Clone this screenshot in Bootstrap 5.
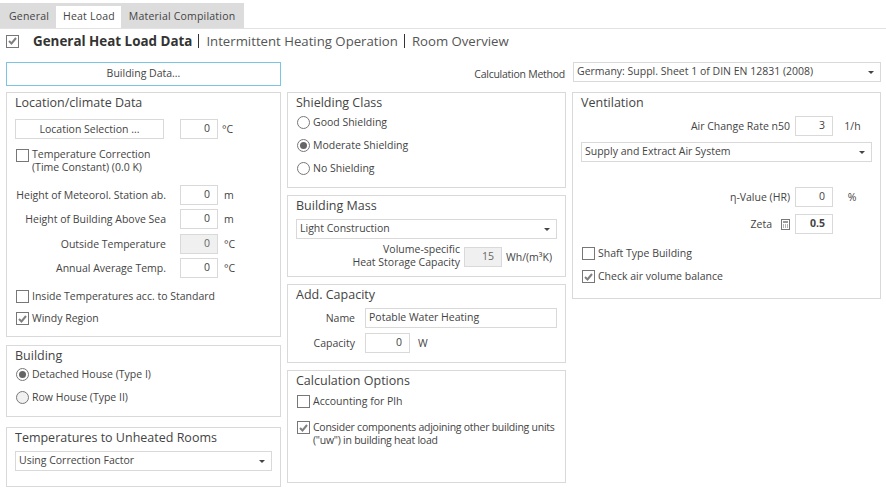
<!DOCTYPE html>
<html lang="en">
<head>
  <meta charset="UTF-8">
  <meta name="viewport" content="width=device-width, initial-scale=1.0">
  <title>Heat Load</title>
  <link href="https://cdn.jsdelivr.net/npm/bootstrap@5.3.2/dist/css/bootstrap.min.css" rel="stylesheet">
  <style>
    body {
      background: #fff;
      color: #444;
      font-family: "Open Sans", "Liberation Sans", sans-serif;
      font-size: 10.5px;
      line-height: 13px;
      overflow: hidden;
    }
    /* tabs */
    .tab-line {
      height: 29px;
      padding-top: 3px;
      border-bottom: 1px solid #e2e2e2;
    }
    .tab-strip {
      width: 244px;
      height: 25px;
      background: #dcdcdc;
      padding-top: 3px;
      border: 0;
    }
    .tab-strip .nav-link {
      height: 22px;
      padding: 4px 7px 0 9px;
      color: #444;
      border: 0;
      border-radius: 0;
      font-size: 10.5px;
      letter-spacing: .2px;
      white-space: nowrap;
      background: transparent;
    }
    .tab-strip .nav-item + .nav-item .nav-link { padding-left: 8px; }
    .tab-strip .nav-item .nav-link.active { background: #fff; color: #444; padding: 4px 6px 0 7px; }

    /* header */
    .head-row { height: 24px; padding-left: 6px; }
    .head-row .form-check-input.tick { margin: 0 14px 0 0; }
    .head-title { font-size: 13.2px; color: #555; line-height: 16px; white-space: nowrap; }
    .head-title b { color: #333; font-weight: 700; font-size: 13.4px; }
    .head-sep { display: inline-block; width: 1px; height: 14px; background: #333; margin: 0 7px 0 6px; vertical-align: -2px; }

    /* top row */
    .top-row { height: 30px; padding: 6px 0 0 6px; margin-top: 3px; }
    .btn-building {
      width: 275px;
      height: 24px;
      padding: 0;
      border: 1px solid #7cc4e4;
      border-radius: 0;
      background: #fff;
      color: #444;
      font-size: 10.5px;
    }
    .calc-label { width: 292px; height: 24px; justify-content: flex-end; padding: 0 8px 0 0; letter-spacing: -.25px; }

    /* columns */
    .cols { padding: 6px 0 0 6px; gap: 6px; }
    .col-left { width: 275px; }
    .col-mid { width: 279px; }
    .col-right { width: 309px; }

    .box {
      border: 1px solid #d9d9d9;
      padding: 2px 8px 0 8px;
      background: #fff;
    }
    .box-title { font-size: 12.5px; line-height: 16px; color: #444; margin: 0; font-weight: 400; }
    .h-loc { height: 245px; margin-bottom: 8px; }
    .h-bld { height: 72px; margin-bottom: 10px; }
    .h-tmp { height: 60px; }
    .h-shi { height: 96px; margin-bottom: 7px; }
    .h-mas { height: 82px; margin-bottom: 7px; }
    .h-add { height: 79px; margin-bottom: 7px; }
    .h-cal { height: 113px; }
    .h-ven { height: 207px; }

    /* controls */
    .form-control.fld {
      width: 38px;
      height: 20px;
      min-height: 0;
      padding: 0 7px 2px 2px;
      border: 1px solid #d9d9d9;
      border-radius: 0;
      font-size: 10.5px;
      line-height: 13px;
      text-align: right;
      color: #444;
      box-shadow: none;
    }
    .form-control.fld:disabled { background: #f0f0f0; color: #666; opacity: 1; }
    .form-control.fld-wide { width: 192px; text-align: left; padding: 0 2px 3px 3px; }
    .form-control.fld-cap { width: 45px; }
    .form-control.fld-strong { font-weight: 700; }
    .form-select.pick {
      height: 20px;
      min-height: 0;
      padding: 0 20px 1px 3px;
      border: 1px solid #d9d9d9;
      border-radius: 0;
      font-size: 10.5px;
      line-height: 13px;
      color: #444;
      box-shadow: none;
      background-position: right 6px center;
      background-size: 6px 3px;
      background-image: url("data:image/svg+xml,%3csvg xmlns='http://www.w3.org/2000/svg' viewBox='0 0 6 3'%3e%3cpath fill='%23444' d='M0 0h6L3 3z'/%3e%3c/svg%3e");
    }
    .pick-calc { width: 308px; }
    .btn-loc {
      width: 149px;
      height: 20px;
      padding: 1px 0 0;
      border: 1px solid #d9d9d9;
      border-radius: 0;
      background: #fff;
      color: #444;
      font-size: 10.5px;
    }
    .form-check-input.tick {
      flex: none;
      width: 13px;
      height: 13px;
      margin: 0 3px 0 1px;
      border: 1px solid #777;
      border-radius: 0;
      background-color: #fff;
      box-shadow: none;
    }
    .form-check-input.tick:checked {
      background-color: #fff;
      border-color: #777;
      background-size: 9px 8px;
      background-image: url("data:image/svg+xml,%3csvg xmlns='http://www.w3.org/2000/svg' viewBox='0 0 9 8'%3e%3cpath fill='none' stroke='%23808080' stroke-width='2' d='M1 4l2.5 2.5L8 1'/%3e%3c/svg%3e");
    }
    .form-check-input.dot {
      flex: none;
      width: 13px;
      height: 13px;
      margin: 0 3px 0 1px;
      border: 1px solid #777;
      background-color: #fff;
      box-shadow: none;
    }
    .form-check-input.dot-soft { background-color: #f1f1f1; }
    .form-check-input.dot:checked {
      background-color: #fff;
      border-color: #777;
      background-size: 11px 11px;
      background-image: url("data:image/svg+xml,%3csvg xmlns='http://www.w3.org/2000/svg' viewBox='0 0 11 11'%3e%3ccircle cx='5.5' cy='5.5' r='3.5' fill='%23666'/%3e%3c/svg%3e");
    }
    .ln { height: 20px; }
    .opt { margin: 0; color: #444; white-space: nowrap; }
    .opt-up { margin-top: -1px; }
    .opt-tight { letter-spacing: -.25px; }
    .lab-left { width: 166px; text-align: right; padding-right: 14px; margin-left: -1px; flex: none; white-space: nowrap; }
    .unit { padding-left: 4px; white-space: nowrap; }
    .unit-gap { padding-left: 6px; }

    /* per-row spacing */
    .gap-4px { margin-top: 4px; }
    .gap-5px { margin-top: 5px; }
    .gap-6px { margin-top: 6px; }
    .gap-7px { margin-top: 7px; }
    .gap-8px { margin-top: 8px; }
    .gap-9px { margin-top: 9px; }
    .gap-10px { margin-top: 10px; }
    .gap-11px { margin-top: 11px; }
    .gap-12px { margin-top: 12px; }
    .gap-13px { margin-top: 13px; }
    .gap-25px { margin-top: 25px; }
    .lab-store { width: 164px; text-align: right; line-height: 13px; flex: none; margin-top: -2px; }
    .lab-add { width: 69px; text-align: right; padding-right: 10px; flex: none; }
    .lab-vent { width: 214px; text-align: right; padding-right: 5px; flex: none; }
    .lab-zeta { padding-right: 0; }
    .vent-unit { width: 38px; text-align: center; }
    .vent-unit-wide { width: 48px; }
    .calc-ico { width: 9px; height: 11px; margin-left: 9px; margin-right: 5px; flex: none; }
  </style>
</head>
<body>
  <!-- Tabs -->
  <div class="tab-line">
    <ul class="nav nav-tabs tab-strip flex-nowrap">
      <li class="nav-item"><a class="nav-link" href="#">General</a></li>
      <li class="nav-item"><a class="nav-link active" href="#">Heat Load</a></li>
      <li class="nav-item"><a class="nav-link" href="#">Material Compilation</a></li>
    </ul>
  </div>

  <!-- Section header -->
  <div class="head-row d-flex align-items-center">
    <input class="form-check-input tick" type="checkbox" checked>
    <div class="head-title"><b>General Heat Load Data</b><span class="head-sep"></span>Intermittent Heating Operation<span class="head-sep"></span>Room Overview</div>
  </div>

  <div class="top-row d-flex align-items-start">
    <button class="btn btn-building" type="button">Building Data...</button>
    <div class="calc-label d-flex align-items-center">Calculation Method</div>
    <select class="form-select pick pick-calc"><option>Germany: Suppl. Sheet 1 of DIN EN 12831 (2008)</option></select>
  </div>

  <div class="cols d-flex align-items-start">
    <!-- Left column -->
    <div class="col-left">
      <div class="box h-loc">
        <h6 class="box-title">Location/climate Data</h6>
        <div class="ln d-flex align-items-center gap-8px">
          <button class="btn btn-loc" type="button">Location Selection ...</button>
          <input class="form-control fld ms-3" value="0">
          <span class="unit">°C</span>
        </div>
        <div class="d-flex align-items-start gap-10px">
          <input class="form-check-input tick" type="checkbox" id="c1">
          <label class="opt opt-up" for="c1">Temperature Correction<br>(Time Constant) (0.0 K)</label>
        </div>
        <div class="ln d-flex align-items-center gap-11px">
          <span class="lab-left">Height of Meteorol. Station ab.</span>
          <input class="form-control fld" value="0"><span class="unit unit-gap">m</span>
        </div>
        <div class="ln d-flex align-items-center gap-4px">
          <span class="lab-left">Height of Building Above Sea</span>
          <input class="form-control fld" value="0"><span class="unit unit-gap">m</span>
        </div>
        <div class="ln d-flex align-items-center gap-5px">
          <span class="lab-left">Outside Temperature</span>
          <input class="form-control fld" value="0" disabled><span class="unit unit-gap">°C</span>
        </div>
        <div class="ln d-flex align-items-center gap-4px">
          <span class="lab-left">Annual Average Temp.</span>
          <input class="form-control fld" value="0"><span class="unit unit-gap">°C</span>
        </div>
        <div class="d-flex align-items-center gap-12px">
          <input class="form-check-input tick" type="checkbox" id="c2">
          <label class="opt" for="c2">Inside Temperatures acc. to Standard</label>
        </div>
        <div class="d-flex align-items-center gap-9px">
          <input class="form-check-input tick" type="checkbox" id="c3" checked>
          <label class="opt" for="c3">Windy Region</label>
        </div>
      </div>

      <div class="box h-bld">
        <h6 class="box-title">Building</h6>
        <div class="d-flex align-items-center gap-4px">
          <input class="form-check-input dot" type="radio" name="bld" id="r1" checked>
          <label class="opt" for="r1">Detached House (Type I)</label>
        </div>
        <div class="d-flex align-items-center gap-10px">
          <input class="form-check-input dot dot-soft" type="radio" name="bld" id="r2">
          <label class="opt" for="r2">Row House (Type II)</label>
        </div>
      </div>

      <div class="box h-tmp">
        <h6 class="box-title">Temperatures to Unheated Rooms</h6>
        <select class="form-select pick gap-5px"><option>Using Correction Factor</option></select>
      </div>
    </div>

    <!-- Middle column -->
    <div class="col-mid">
      <div class="box h-shi">
        <h6 class="box-title">Shielding Class</h6>
        <div class="d-flex align-items-center gap-5px">
          <input class="form-check-input dot" type="radio" name="shi" id="s1">
          <label class="opt" for="s1">Good Shielding</label>
        </div>
        <div class="d-flex align-items-center gap-10px">
          <input class="form-check-input dot" type="radio" name="shi" id="s2" checked>
          <label class="opt" for="s2">Moderate Shielding</label>
        </div>
        <div class="d-flex align-items-center gap-10px">
          <input class="form-check-input dot" type="radio" name="shi" id="s3">
          <label class="opt" for="s3">No Shielding</label>
        </div>
      </div>

      <div class="box h-mas">
        <h6 class="box-title">Building Mass</h6>
        <select class="form-select pick gap-5px"><option>Light Construction</option></select>
        <div class="d-flex align-items-center gap-6px">
          <span class="lab-store">Volume-specific<br>Heat Storage Capacity</span>
          <input class="form-control fld ms-1" value="15" disabled>
          <span class="unit">Wh/(m³K)</span>
        </div>
      </div>

      <div class="box h-add">
        <h6 class="box-title">Add. Capacity</h6>
        <div class="ln d-flex align-items-center gap-5px">
          <span class="lab-add">Name</span>
          <input class="form-control fld fld-wide" value="Potable Water Heating">
        </div>
        <div class="ln d-flex align-items-center gap-5px">
          <span class="lab-add">Capacity</span>
          <input class="form-control fld fld-cap" value="0"><span class="unit ms-1">W</span>
        </div>
      </div>

      <div class="box h-cal">
        <h6 class="box-title">Calculation Options</h6>
        <div class="d-flex align-items-center gap-6px">
          <input class="form-check-input tick" type="checkbox" id="o1">
          <label class="opt" for="o1">Accounting for Plh</label>
        </div>
        <div class="d-flex align-items-start gap-13px">
          <input class="form-check-input tick" type="checkbox" id="o2" checked>
          <label class="opt opt-tight" for="o2">Consider components adjoining other building units<br>("uw") in building heat load</label>
        </div>
      </div>
    </div>

    <!-- Right column -->
    <div class="col-right">
      <div class="box h-ven">
        <h6 class="box-title">Ventilation</h6>
        <div class="ln d-flex align-items-center gap-5px">
          <span class="lab-vent">Air Change Rate n50</span>
          <input class="form-control fld" value="3"><span class="vent-unit vent-unit-wide">1/h</span>
        </div>
        <select class="form-select pick gap-6px"><option>Supply and Extract Air System</option></select>
        <div class="ln d-flex align-items-center gap-25px">
          <span class="lab-vent">η-Value (HR)</span>
          <input class="form-control fld" value="0"><span class="vent-unit">%</span>
        </div>
        <div class="ln d-flex align-items-center gap-7px">
          <span class="lab-vent lab-zeta d-flex align-items-center justify-content-end">Zeta
            <svg class="calc-ico" viewBox="0 0 9 11"><rect x=".5" y=".5" width="8" height="10" fill="#fff" stroke="#777"/><rect x="2" y="2" width="5" height="2" fill="#999"/><path d="M2 6h1M4 6h1M6 6h1M2 8h1M4 8h1M6 8h1" stroke="#666"/></svg>
          </span>
          <input class="form-control fld fld-strong" value="0.5">
        </div>
        <div class="d-flex align-items-center gap-13px">
          <input class="form-check-input tick" type="checkbox" id="v1">
          <label class="opt" for="v1">Shaft Type Building</label>
        </div>
        <div class="d-flex align-items-center gap-10px">
          <input class="form-check-input tick" type="checkbox" id="v2" checked>
          <label class="opt" for="v2">Check air volume balance</label>
        </div>
      </div>
    </div>
  </div>

  <script src="https://cdn.jsdelivr.net/npm/bootstrap@5.3.2/dist/js/bootstrap.bundle.min.js"></script>
</body>
</html>
